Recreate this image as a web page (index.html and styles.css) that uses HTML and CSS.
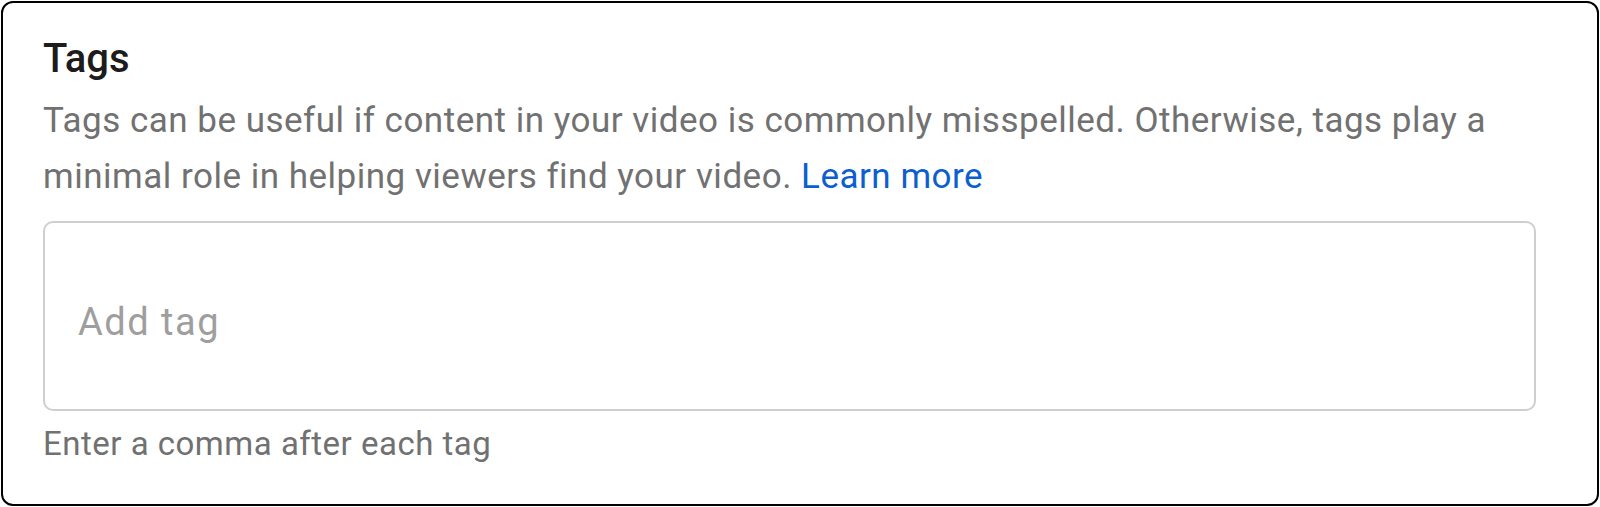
FILE: index.html
```html
<!DOCTYPE html>
<html lang="en">
<head>
<meta charset="utf-8">
<title>Tags</title>
<link rel="stylesheet" href="styles.css">
</head>
<body>
<section class="card">
  <h2 class="title">Tags</h2>
  <p class="desc">Tags can be useful if content in your video is commonly misspelled. Otherwise, tags play a minimal role in helping viewers find your video. <a class="link" href="#">Learn more</a></p>
  <div class="field">
    <span class="placeholder">Add tag</span>
  </div>
  <p class="hint">Enter a comma after each tag</p>
</section>
</body>
</html>
```

FILE: styles.css
```css
html, body {
  margin: 0;
  padding: 0;
  background: #ffffff;
}

body {
  font-family: Roboto, "Noto Sans", Arial, sans-serif;
}

.card {
  box-sizing: border-box;
  margin: 1px 1px 0 1px;
  height: 505px;
  border: 2px solid #000000;
  border-radius: 12px;
  padding: 32px 60px 0 40px;
  display: flex;
  flex-direction: column;
}

.title {
  margin: 0;
  font-size: 40px;
  line-height: 48px;
  font-weight: 500;
  color: #1c1c1c;
}

.desc {
  margin: 10px 0 0 0;
  font-size: 35px;
  letter-spacing: 0.5px;
  line-height: 56px;
  color: #717171;
  max-width: 1493px;
}

.link {
  color: #0b5fcf;
  text-decoration: none;
}

.field {
  box-sizing: border-box;
  margin-top: 16px;
  width: 1493px;
  height: 190px;
  border: 2px solid #cfcfcf;
  border-radius: 10px;
  padding: 11px 34px 0 33px;
  display: flex;
  align-items: center;
}

.placeholder {
  font-size: 38px;
  letter-spacing: 1.5px;
  color: #9e9e9e;
  line-height: 48px;
}

.hint {
  margin: 13px 0 0 0;
  font-size: 33px;
  letter-spacing: 0.5px;
  line-height: 40px;
  color: #717171;
}
```
